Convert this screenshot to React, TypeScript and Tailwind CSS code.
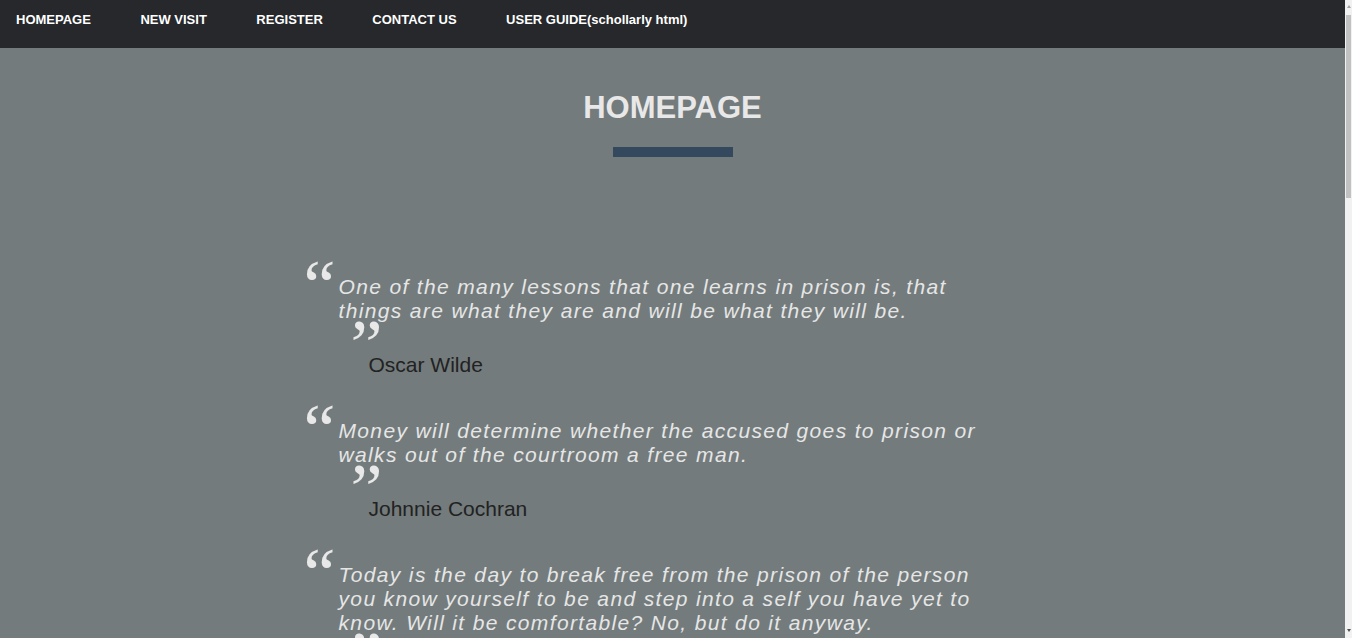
import React from 'react';

type Quote = {
  text: string;
  author: string;
};

const quotes: Quote[] = [
  {
    text: 'One of the many lessons that one learns in prison is, that things are what they are and will be what they will be.',
    author: 'Oscar Wilde',
  },
  {
    text: 'Money will determine whether the accused goes to prison or walks out of the courtroom a free man.',
    author: 'Johnnie Cochran',
  },
  {
    text: 'Today is the day to break free from the prison of the person you know yourself to be and step into a self you have yet to know. Will it be comfortable? No, but do it anyway.',
    author: 'Mel Robbins',
  },
];

const navLinks = ['HOMEPAGE', 'NEW VISIT', 'REGISTER', 'CONTACT US', 'USER GUIDE(schollarly html)'];

const QuoteBlock: React.FC<{ quote: Quote }> = ({ quote }) => {
  return (
    <div className="relative">
      {/* opening mark, like a ::before */}
      <span className="absolute -left-[1px] -top-[25px] font-['Liberation_Serif',serif] text-[72px] leading-none text-[#e8e8e8] select-none">
        &ldquo;
      </span>
      <p className="ml-[34px] w-[660px] italic text-[21px] leading-[24px] tracking-[1.35px] text-[#e6e6e6]">{quote.text}</p>
      <div className="relative h-[30px]">
        <span className="absolute left-[46px] -top-[14px] font-['Liberation_Serif',serif] text-[72px] leading-none text-[#e8e8e8] select-none">
          &rdquo;
        </span>
      </div>
      <div className="ml-[64px] text-[21px] leading-[24px] text-[#222]">{quote.author}</div>
    </div>
  );
};

const App: React.FC = () => {
  return (
    <div className="flex h-screen overflow-hidden bg-[#737b7c] font-['Liberation_Sans',Arial,sans-serif]">
      <div className="flex-1">
        <nav className="h-12 bg-[#26282c] px-4 pt-[7px]">
          <ul className="flex gap-[49.5px]">
            {navLinks.map((link) => (
              <li key={link}>
                <a href="#" className="text-[13px] leading-4 font-bold text-white">
                  {link}
                </a>
              </li>
            ))}
          </ul>
        </nav>

        <main className="pb-[160px]">
          <h1 className="mt-[44px] text-center text-[31px] leading-none font-bold text-[#e8e8e8]">HOMEPAGE</h1>
          <div className="mx-auto mt-[24px] h-[10px] w-[120px] bg-[#34495e]" />

          <div className="mx-auto mt-[118px] flex w-[736px] flex-col gap-[42px]">
            {quotes.map((q) => (
              <QuoteBlock key={q.author} quote={q} />
            ))}
          </div>
        </main>
      </div>

      {/* page scrollbar */}
      <div className="flex w-[7px] flex-col items-center bg-[#f1f1f1]">
        <div className="mt-[5px] h-0 w-0 border-x-[2px] border-b-[3px] border-x-transparent border-b-[#a3a3a3]" />
        <div className="mt-[7px] h-[183px] w-[5px] bg-[#c1c1c1]" />
        <div className="flex-1" />
        <div className="mb-[6px] h-0 w-0 border-x-[2px] border-t-[3px] border-x-transparent border-t-[#505050]" />
      </div>
    </div>
  );
};

export default App;
